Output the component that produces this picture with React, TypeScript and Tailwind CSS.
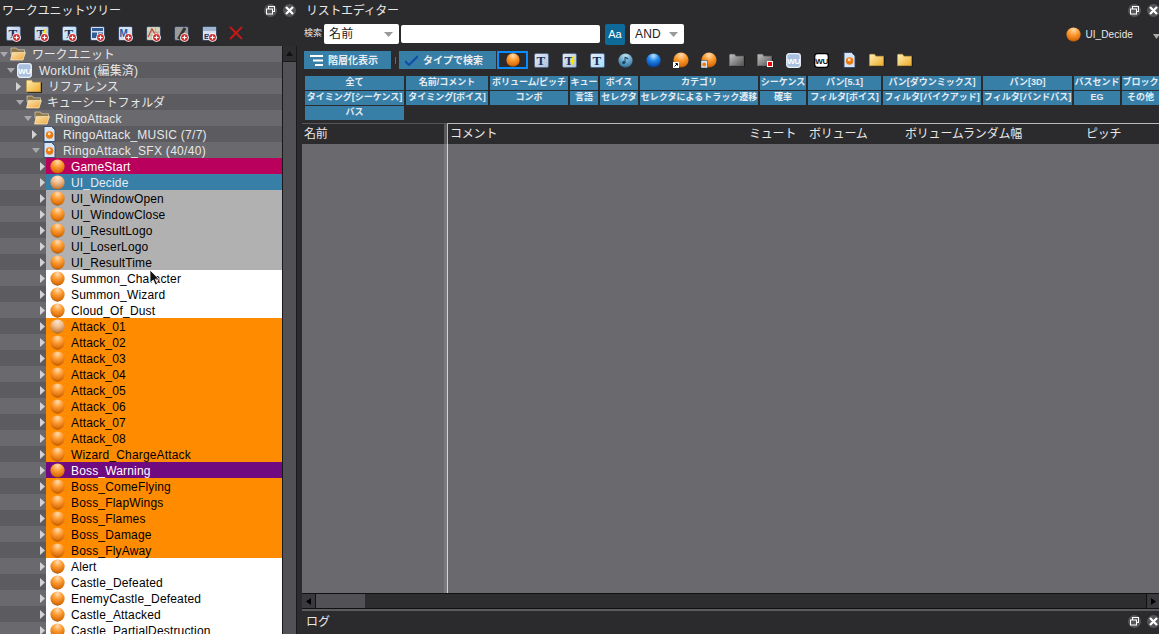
import React from "react";

const FONT = "font-['Liberation_Sans','Noto_Sans_CJK_JP',sans-serif]";

type BallKind = "orange" | "pale" | "blue" | "note";
const ballStops: Record<BallKind, string[]> = {
  orange: ["#ffdcb0", "#fd9a30", "#d96c08", "#7a3a02"],
  pale: ["#fbe6d0", "#efbc8c", "#c98040", "#6e4a28"],
  blue: ["#bfe4ff", "#1f86ea", "#0a4aa8", "#02245c"],
  note: ["#c6e2f2", "#74add0", "#3f7fa6", "#1d4460"],
};

function Ball({ size = 15, kind = "orange", badge }: { size?: number; kind?: BallKind; badge?: "link" | "file" }) {
  const id = React.useId();
  const s = ballStops[kind];
  return (
    <svg width={size} height={size} viewBox="0 0 16 16" className="shrink-0">
      <defs>
        <radialGradient id={id} cx="0.5" cy="0.18" r="0.88">
          <stop offset="0" stopColor={s[0]} />
          <stop offset="0.42" stopColor={s[1]} />
          <stop offset="0.82" stopColor={s[2]} />
          <stop offset="1" stopColor={s[3]} />
        </radialGradient>
      </defs>
      <circle cx="8" cy="8" r="7.6" fill={`url(#${id})`} />
      {kind === "note" && <path d="M8 4v6.200a1.800 1.500 0 1 1-1-1.300V4zM8 4l3 1.500v1.500L8 5.500z" fill="#174466" />}
      {badge === "link" && (
        <>
          <rect x="0" y="10" width="6" height="6" fill="#fff" />
          <path d="M1.500 14.500 4 12M2.500 11.500H4.500V13.500" fill="none" stroke="#000" strokeWidth="1" />
        </>
      )}
      {badge === "file" && (
        <>
          <rect x="0" y="8.500" width="6.500" height="7.500" fill="#dbe7f7" stroke="#39506e" strokeWidth=".6" />
          <circle cx="3.200" cy="12.500" r="2" fill="#ea7c12" />
        </>
      )}
    </svg>
  );
}

function Folder({ open = false, gray = false, red = false }: { open?: boolean; gray?: boolean; red?: boolean }) {
  const id = React.useId();
  const a = gray ? "#c4c4c4" : "#fff0b6";
  const b = gray ? "#525252" : "#eeaa28";
  return (
    <svg width="16" height="14" viewBox="0 0 16 14" className="shrink-0">
      <defs>
        <linearGradient id={id} x1="0" y1="0" x2="1" y2="1">
          <stop offset="0" stopColor={open ? "#fde3ac" : a} />
          <stop offset="1" stopColor={open ? "#eda63c" : b} />
        </linearGradient>
      </defs>
      {open ? (
        <>
          <path d="M1 1h5.500l1.200 1.800h6.800V7H1z" fill="#8a7648" stroke="#efe2c2" strokeWidth=".6" />
          <path d="M.6 13 2.400 5.400h13l-2.400 7.600z" fill={`url(#${id})`} stroke="#ffefcf" strokeWidth=".7" />
        </>
      ) : (
        <>
          <path d="M1.500 13.500h14V3.500" fill="none" stroke="#1c1c1c" strokeWidth="1" />
          <path d="M.5 1.800V12.800h14V3.200H6.800L5.600 1.200H1z" fill={`url(#${id})`} stroke={gray ? "#777" : "#c69a34"} strokeWidth=".5" />
        </>
      )}
      {red && (
        <>
          <rect x="10" y="8" width="6" height="6" fill="#fff" />
          <rect x="11" y="9" width="4" height="4" fill="#ee0000" />
        </>
      )}
    </svg>
  );
}

function WU({ dark = false }: { dark?: boolean }) {
  return (
    <svg width="15" height="15" viewBox="0 0 15 15" className="shrink-0">
      <rect x=".7" y=".7" width="13.600" height="13.600" rx="2.500" fill={dark ? "#fff" : "#a9c0df"} stroke={dark ? "#000" : "#e8eff9"} strokeWidth="1.300" />
      <text x="7.500" y="10.500" textAnchor="middle" fontSize="8" fontWeight="700" fontFamily="Liberation Sans" letterSpacing="-.5" fill={dark ? "#111" : "#fff"}>WU</text>
    </svg>
  );
}

function CueSheetFile() {
  return (
    <svg width="13" height="16" viewBox="0 0 13 16" className="shrink-0">
      <path d="M1 .5h7.500l3.500 3.500v11.500H1z" fill="#d6e4f6" stroke="#31476a" strokeWidth=".9" />
      <circle cx="6.600" cy="9" r="3.700" fill="#e87a10" />
      <circle cx="6.200" cy="7.800" r="1.500" fill="#ffd9ac" />
    </svg>
  );
}

function TIcon({ variant = 0, size = 15 }: { variant?: number; size?: number }) {
  const id = React.useId();
  return (
    <svg width={size} height={size} viewBox="0 0 15 15" className="shrink-0">
      <defs>
        <linearGradient id={id} x1="0" y1="0" x2="1" y2="1">
          <stop offset="0" stopColor="#e6edf6" />
          <stop offset="1" stopColor={variant === 2 ? "#a6dcf6" : "#aebfd6"} />
        </linearGradient>
      </defs>
      <rect x=".5" y=".5" width="14" height="14" rx="1.500" fill={`url(#${id})`} stroke="#4a6488" strokeWidth=".8" />
      <text x="7" y="12" textAnchor="middle" fontSize="13" fontWeight="700" fontFamily="Liberation Serif" fill="#16305a">T</text>
      {variant === 1 && <path d="M10.500 3.500 8 9h2l-1.200 5.500L13 7.500h-2l1.800-4z" fill="#ffe800" />}
    </svg>
  );
}

function Add({ children }: { children: React.ReactNode }) {
  return (
    <span className="relative flex w-[28px] shrink-0 items-center pl-[6px]">
      {children}
      <svg width="9" height="9" viewBox="0 0 10 10" className="absolute left-[12px] top-[7px]">
        <circle cx="5" cy="5" r="4.800" fill="#fff" />
        <circle cx="5" cy="5" r="3.800" fill="#d22d2d" />
        <path d="M2.700 5h4.600M5 2.700v4.600" stroke="#fff" strokeWidth="1.300" />
      </svg>
    </span>
  );
}

function Box16({ kind }: { kind: string }) {
  if (kind === "t") return <TIcon />;
  if (kind === "ty") return <TIcon variant={1} />;
  if (kind === "tb") return <TIcon variant={2} />;
  const bg = kind === "chart" ? "#d8d3bd" : kind === "gray" ? "#9a9a9a" : "#d6e0f0";
  return (
    <svg width="15" height="15" viewBox="0 0 15 15" className="shrink-0">
      <rect x=".5" y=".5" width="14" height="14" rx="1.500" fill={bg} stroke="#2a3a52" strokeWidth=".8" />
      {kind === "tile" && <path d="M2 2h11v3H2zM2 6.500h5V12H2zM8 6.500h5V12H8z" fill="#2f5c94" />}
      {kind === "m" && <text x="1.500" y="11" fontSize="10" fontWeight="700" fontFamily="Liberation Sans" fill="#1f5fa5">M</text>}
      {kind === "chart" && <path d="M2 11 6 3l3 5 2-1 3 3" fill="none" stroke="#c83232" strokeWidth="1.100" />}
      {kind === "chart" && <path d="M1 6h13M1 9.500h13M5 1v13M9.500 1v13" stroke="#8f9a7a" strokeWidth=".4" />}
      {kind === "gray" && <path d="M4.500 13 11 2" stroke="#333" strokeWidth="3" />}
      {kind === "bo" && <path d="M1 1h13v4H1z" fill="#9fb4cf" />}
      {kind === "bo" && <text x="2" y="12.500" fontSize="8" fontWeight="700" fontFamily="Liberation Sans" fill="#173a6a">B</text>}
    </svg>
  );
}

function WinBtn({ kind }: { kind: "restore" | "close" }) {
  return (
    <span className="flex h-[13px] w-[13px] shrink-0 items-center justify-center rounded-full bg-[#55555a]">
      {kind === "restore" ? (
        <svg width="9" height="9" viewBox="0 0 9 9">
          <rect x="2.500" y=".5" width="6" height="5" fill="none" stroke="#fff" strokeWidth="1" />
          <rect x=".5" y="3" width="6" height="5" fill="#55555a" stroke="#fff" strokeWidth="1" />
        </svg>
      ) : (
        <svg width="9" height="9" viewBox="0 0 9 9">
          <path d="M1 1l7 7M8 1 1 8" stroke="#fff" strokeWidth="2.200" />
        </svg>
      )}
    </span>
  );
}

function Arrow({ down }: { down: boolean }) {
  return down ? (
    <svg width="8" height="5" viewBox="0 0 8 5" className="shrink-0">
      <path d="M0 0h8L4 5z" fill="#a9a9ad" />
    </svg>
  ) : (
    <svg width="5" height="9" viewBox="0 0 5 9" className="shrink-0">
      <path d="M0 0v9l5-4.500z" fill="#d2d2d5" />
    </svg>
  );
}

type Tree = { label: string; wrap: string; box: string; down: boolean; icon: React.ReactNode; gap: string };
const tree: Tree[] = [
  { label: "ワークユニット", wrap: "pl-0", box: "w-[10px]", down: true, icon: <Folder open />, gap: "ml-[6px] tracking-[-0.2px]" },
  { label: "WorkUnit (編集済)", wrap: "pl-[6px]", box: "w-[11px] pl-[1px]", down: true, icon: <WU />, gap: "ml-[7px] tracking-[0.2px]" },
  { label: "リファレンス", wrap: "pl-[16px]", box: "w-[10px]", down: false, icon: <Folder />, gap: "ml-[6px] tracking-[-0.2px]" },
  { label: "キューシートフォルダ", wrap: "pl-[14px]", box: "w-[12px] pl-[2px]", down: true, icon: <Folder open />, gap: "ml-[5px] tracking-[-0.2px]" },
  { label: "RingoAttack", wrap: "pl-[22px]", box: "w-[12px] pl-[2px]", down: true, icon: <Folder open />, gap: "ml-[5px]" },
  { label: "RingoAttack_MUSIC (7/7)", wrap: "pl-[32px]", box: "w-[11px]", down: false, icon: <CueSheetFile />, gap: "ml-[7px] tracking-[0.25px]" },
  { label: "RingoAttack_SFX (40/40)", wrap: "pl-[30px]", box: "w-[13px] pl-[2px]", down: true, icon: <CueSheetFile />, gap: "ml-[7px] tracking-[0.3px]" },
];

type Cue = [string, string];
const RED = "bg-[#b8005c] text-white";
const BLUE = "bg-[#387fa8] text-[#e6edf2]";
const GRAY = "bg-[#b1b1b1] text-black";
const WHITE = "bg-white text-black";
const ORANGE = "bg-[#ff8c00] text-black";
const PURPLE = "bg-[#700a80] text-white";
const cues: Cue[] = [
  ["GameStart", RED],
  ["UI_Decide", BLUE],
  ["UI_WindowOpen", GRAY],
  ["UI_WindowClose", GRAY],
  ["UI_ResultLogo", GRAY],
  ["UI_LoserLogo", GRAY],
  ["UI_ResultTime", GRAY],
  ["Summon_Character", WHITE],
  ["Summon_Wizard", WHITE],
  ["Cloud_Of_Dust", WHITE],
  ["Attack_01", ORANGE],
  ["Attack_02", ORANGE],
  ["Attack_03", ORANGE],
  ["Attack_04", ORANGE],
  ["Attack_05", ORANGE],
  ["Attack_06", ORANGE],
  ["Attack_07", ORANGE],
  ["Attack_08", ORANGE],
  ["Wizard_ChargeAttack", ORANGE],
  ["Boss_Warning", PURPLE],
  ["Boss_ComeFlying", ORANGE],
  ["Boss_FlapWings", ORANGE],
  ["Boss_Flames", ORANGE],
  ["Boss_Damage", ORANGE],
  ["Boss_FlyAway", ORANGE],
  ["Alert", WHITE],
  ["Castle_Defeated", WHITE],
  ["EnemyCastle_Defeated", WHITE],
  ["Castle_Attacked", WHITE],
  ["Castle_PartialDestruction", WHITE],
];

function rowBg(i: number) {
  return i % 2 === 0 ? "bg-[#6a696e]" : "bg-[#5c5b60]";
}

const filters = [
  "全て", "名前/コメント", "ボリューム/ピッチ", "キュー", "ボイス", "カテゴリ", "シーケンス", "パン[5.1]", "パン[ダウンミックス]", "パン[3D]", "バスセンド", "ブロック",
  "タイミング[シーケンス]", "タイミング[ボイス]", "コンボ", "言語", "セレクタ", "セレクタによるトラック遷移", "確率", "フィルタ[ボイス]", "フィルタ[バイクアッド]", "フィルタ[バンドパス]", "EG", "その他",
  "バス",
];

function SelectBox({ label, className }: { label: string; className: string }) {
  return (
    <div className={`flex h-[20px] shrink-0 items-center justify-between rounded-[2px] bg-white pl-[5px] pr-[6px] text-[12px] text-[#222] ${className}`}>
      <span>{label}</span>
      <svg width="9" height="5" viewBox="0 0 9 5">
        <path d="M0 0h9L4.500 5z" fill="#999" />
      </svg>
    </div>
  );
}

export default function App() {
  return (
    <div className={`${FONT} relative flex h-[634px] w-[1159px] overflow-hidden bg-[#2b2b2e] text-[12px] tracking-[0.17px] text-[#e8e8e8]`}>
      {/* left panel */}
      <div className="flex w-[298px] shrink-0 flex-col">
        <div className="flex h-[20px] shrink-0 items-center px-[2px] pt-[1px]">
          <span className="flex-1 tracking-[-0.1px]">ワークユニットツリー</span>
          <div className="flex gap-[6px]">
            <WinBtn kind="restore" />
            <WinBtn kind="close" />
          </div>
        </div>
        <div className="flex h-[26px] shrink-0 items-center">
          {["t", "ty", "tb", "tile", "m", "chart", "gray", "bo"].map((k) => (
            <Add key={k}>
              <Box16 kind={k} />
            </Add>
          ))}
          <svg width="14" height="14" viewBox="0 0 14 14" className="ml-[5px]">
            <path d="M1 1l12 12M13 1 1 13" stroke="#c81818" strokeWidth="1.800" />
          </svg>
        </div>
        <div className="flex min-h-0 flex-1">
          <div className="flex w-[282px] shrink-0 flex-col overflow-hidden">
            {tree.map((t, i) => (
              <div key={t.label} className={`flex h-[16px] shrink-0 items-center ${rowBg(i)} ${t.wrap}`}>
                <span className={`flex items-center ${t.box}`}>
                  <Arrow down={t.down} />
                </span>
                {t.icon}
                <span className={`${t.gap} whitespace-nowrap pt-[1px]`}>{t.label}</span>
              </div>
            ))}
            {cues.map(([name, cls], i) => (
              <div key={name} className={`flex h-[16px] shrink-0 items-center ${rowBg(i + 7)}`}>
                <span className="flex w-[46px] shrink-0 justify-end pr-[1px]">
                  <Arrow down={false} />
                </span>
                <div className={`flex h-[16px] flex-1 items-center pl-[4px] ${cls}`}>
                  <Ball kind={name === "UI_Decide" || name === "Attack_01" ? "pale" : "orange"} />
                  <span className="ml-[6px] whitespace-nowrap pt-[1px]">{name}</span>
                </div>
              </div>
            ))}
          </div>
          <div className="flex w-[15px] shrink-0 flex-col border-x border-[#1a1a1c] bg-[#515156]">
            <div className="flex h-[16px] items-center justify-center border-b border-[#1a1a1c] bg-[#2d2d30]">
              <svg width="7" height="5" viewBox="0 0 7 5">
                <path d="M3.500 0 7 5H0z" fill="#111" />
              </svg>
            </div>
          </div>
        </div>
      </div>

      {/* right panel */}
      <div className="ml-[4px] flex min-w-0 flex-1 flex-col">
        <div className="flex h-[20px] shrink-0 items-center pl-[4px] pt-[1px]">
          <span className="flex-1 tracking-[-0.3px]">リストエディター</span>
          <div className="mr-[-1px] flex gap-[6px]">
            <WinBtn kind="restore" />
            <WinBtn kind="close" />
          </div>
        </div>
        <div className="flex h-[24px] shrink-0 items-center pl-[2px] pt-[4px]">
          <span className="w-[20px] shrink-0 text-[9px] tracking-normal">検索</span>
          <SelectBox label="名前" className="w-[75px]" />
          <div className="ml-[2px] h-[18px] w-[199px] shrink-0 rounded-[2px] bg-white" />
          <div className="ml-[5px] flex h-[21px] w-[20px] shrink-0 items-center justify-center rounded-[2px] bg-[#0e6a99] text-[11px] tracking-normal text-white">Aa</div>
          <SelectBox label="AND" className="ml-[5px] w-[54px]" />
          <div className="mr-[-1px] ml-auto flex items-center">
            <Ball size={15} />
            <span className="ml-[4px] text-[10px] tracking-[0.1px]">UI_Decide</span>
            <svg width="7" height="5" viewBox="0 0 7 5" className="ml-[20px] mt-[4px]">
              <path d="M0 0h7L3.500 5z" fill="#aaa" />
            </svg>
          </div>
        </div>
        <div className="mt-[7px] flex h-[18px] shrink-0 items-center pl-[2px]">
          <div className="flex h-[18px] w-[87px] items-center bg-[#387fa8] pl-[6px] text-[10px] font-bold tracking-normal text-[#e8eef2]">
            <svg width="13" height="11" viewBox="0 0 13 11">
              <path d="M0 0h13v2H0zM3 4.500h10v2H3zM5 9h8v2H5z" fill="#fff" />
            </svg>
            <span className="ml-[5px]">階層化表示</span>
          </div>
          <span className="ml-[4px] h-[7px] w-[1px] bg-[#666]" />
          <div className="ml-[3px] flex h-[18px] w-[97px] items-center bg-[#387fa8] pl-[6px] text-[10px] font-bold tracking-normal text-[#e8eef2]">
            <svg width="13" height="11" viewBox="0 0 13 11">
              <path d="M0 6l4 4 9-9" fill="none" stroke="#0d4ea8" strokeWidth="2" />
            </svg>
            <span className="ml-[5px]">タイプで検索</span>
          </div>
          <div className="ml-[1px] flex h-[18px] w-[31px] items-center justify-center border-2 border-[#0a8cff] bg-[#2b2b2e]">
            <Ball size={14} />
          </div>
          <div className="ml-[-1px] flex items-center">
            {[
              <TIcon />,
              <TIcon variant={1} />,
              <TIcon variant={2} />,
              <Ball size={15} kind="note" />,
              <Ball size={15} kind="blue" />,
              <Ball size={16} kind="orange" badge="link" />,
              <Ball size={16} kind="orange" badge="file" />,
              <Folder gray />,
              <Folder gray red />,
              <WU />,
              <WU dark />,
              <CueSheetFile />,
              <Folder />,
              <Folder />,
            ].map((el, i) => (
              <span key={i} className="flex w-[28px] justify-center">
                {el}
              </span>
            ))}
          </div>
        </div>
        <div className="mt-[7px] grid shrink-0 grid-cols-[99px_82px_78px_28px_38px_118px_46px_73px_98px_89px_46px_37px] gap-x-[2px] gap-y-[1px] overflow-hidden pl-[3px] text-[9px] font-bold tracking-normal text-[#e4ecf2]">
          {filters.map((f) => (
            <div key={f} className="flex h-[14px] items-center justify-center overflow-hidden whitespace-nowrap bg-[#387fa8]">
              {f}
            </div>
          ))}
        </div>
        <div className="mt-[3px] flex h-[21px] shrink-0">
          <div className="flex w-[142px] items-center border-t border-[#56565a] pl-[2px] tracking-[-0.2px]">名前</div>
          <div className="w-[3px] border-t border-[#56565a] bg-[#59585d]" />
          <div className="flex flex-1 items-center border-t border-l border-[#b9b9bc] tracking-[-0.2px]">
            <span className="w-[301px] pl-[2px]">コメント</span>
            <span className="w-[60px]">ミュート</span>
            <span className="w-[96px]">ボリューム</span>
            <span className="w-[181px]">ボリュームランダム幅</span>
            <span>ピッチ</span>
          </div>
        </div>
        <div className="flex min-h-0 flex-1 bg-[#6a696e]">
          <div className="w-[142px] shrink-0" />
          <div className="w-[3px] shrink-0 bg-[#7b7a7f]" />
          <div className="flex-1 border-l border-[#d4d4d6]" />
        </div>
        <div className="flex h-[16px] shrink-0 border-y border-[#111] bg-[#2d2d30]">
          <div className="flex w-[14px] items-center justify-center border-r border-[#111] bg-[#3a3a3e]">
            <svg width="5" height="7" viewBox="0 0 5 7">
              <path d="M5 0v7L0 3.500z" fill="#000" />
            </svg>
          </div>
          <div className="w-[49px] bg-[#515156]" />
          <div className="flex-1" />
          <div className="flex w-[13px] items-center justify-center border-l border-[#111] bg-[#3a3a3e]">
            <svg width="5" height="7" viewBox="0 0 5 7">
              <path d="M0 0v7l5-3.500z" fill="#000" />
            </svg>
          </div>
        </div>
        <div className="h-[2px] shrink-0 bg-[#5c5c60]" />
        <div className="flex h-[23px] shrink-0 items-center pb-[2px] pl-[4px]">
          <span className="flex-1 tracking-normal">ログ</span>
          <div className="mr-[-1px] flex gap-[6px]">
            <WinBtn kind="restore" />
            <WinBtn kind="close" />
          </div>
        </div>
      </div>

      {/* mouse pointer in the capture */}
      <svg width="12" height="18" viewBox="0 0 12 18" className="absolute left-[149px] top-[269px]">
        <path d="M1 1v13l3.200-3 2.300 5 2-1-2.300-4.800H10z" fill="#111" stroke="#fff" strokeWidth=".8" />
      </svg>
    </div>
  );
}
